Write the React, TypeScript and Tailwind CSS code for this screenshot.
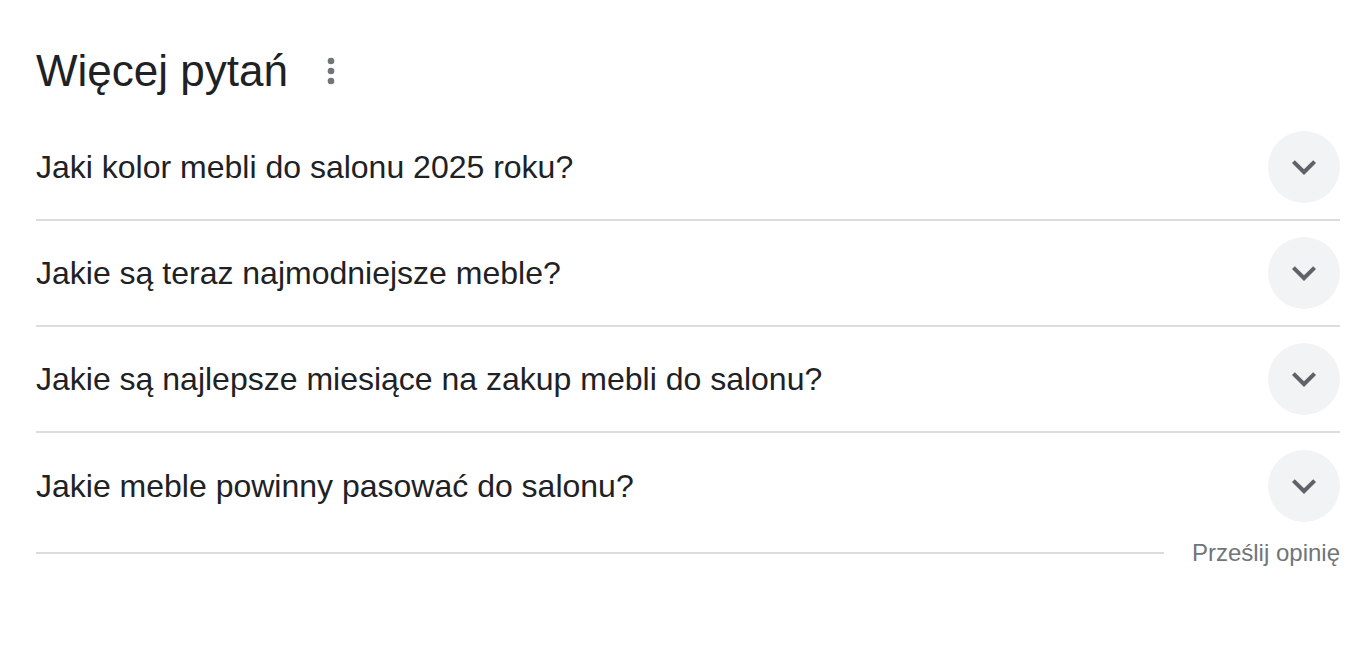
const questions = [
  'Jaki kolor mebli do salonu 2025 roku?',
  'Jakie są teraz najmodniejsze meble?',
  'Jakie są najlepsze miesiące na zakup mebli do salonu?',
  'Jakie meble powinny pasować do salonu?',
]

function ExpandIcon() {
  return (
    <svg viewBox="0 0 24 24" className="h-[48px] w-[48px] fill-[#5f6368]">
      <path d="M16.59 8.59 12 13.17 7.41 8.59 6 10l6 6 6-6z" />
    </svg>
  )
}

function MoreIcon() {
  return (
    <svg viewBox="0 0 24 24" className="h-[40px] w-[40px] fill-[#70757a]">
      <circle cx="12" cy="6" r="2" />
      <circle cx="12" cy="12" r="2" />
      <circle cx="12" cy="18" r="2" />
    </svg>
  )
}

export default function App() {
  return (
    <div className="min-h-[646px] bg-white pl-[36px] pr-[32px] pt-[27px] font-['Liberation_Sans',Arial,sans-serif]">
      <div className="flex h-[88px] items-center">
        <h2 className="text-[44px] leading-[56px] text-[#202124]">Więcej pytań</h2>
        <span className="ml-[23px] flex items-center">
          <MoreIcon />
        </span>
      </div>

      {questions.map((q, i) => (
        <div
          key={q}
          className={
            i < questions.length - 1
              ? 'flex h-[106px] items-center justify-between border-b-2 border-[#dadce0]'
              : 'flex h-[106px] items-center justify-between'
          }
        >
          <span className="text-[32px] leading-[40px] text-[#202124]">{q}</span>
          <span className="flex h-[72px] w-[72px] items-center justify-center rounded-full bg-[#f1f3f4]">
            <ExpandIcon />
          </span>
        </div>
      ))}

      <div className="flex h-[28px] items-center">
        <div className="mr-[28px] h-[2px] flex-1 bg-[#dadce0]" />
        <span className="text-[24px] leading-[28px] text-[#70757a]">Prześlij opinię</span>
      </div>
    </div>
  )
}
